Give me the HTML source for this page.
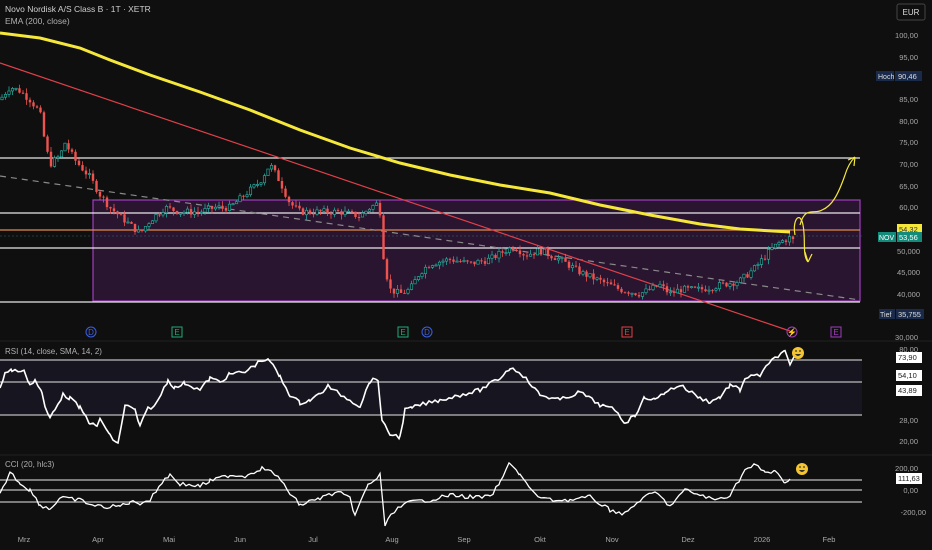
<!DOCTYPE html>
<html><head><meta charset="utf-8">
<style>
html,body{margin:0;padding:0;background:#0f0f0f;width:932px;height:550px;overflow:hidden;font-family:"Liberation Sans",sans-serif;}
svg{display:block}
text{font-family:"Liberation Sans",sans-serif;}
</style></head><body>
<svg id="s" width="932" height="550" viewBox="0 0 932 550" xmlns="http://www.w3.org/2000/svg">
<rect width="932" height="550" fill="#0f0f0f"/>
<!-- purple box -->
<rect x="93" y="200" width="767" height="101" fill="#2a1530" stroke="#a23ec0" stroke-width="1.2"/>
<!-- RSI band -->
<rect x="0" y="360" width="862" height="55" fill="#17151f"/>
<!-- pane separators -->
<line x1="0" y1="341" x2="932" y2="341" stroke="#222" />
<line x1="0" y1="455" x2="932" y2="455" stroke="#222" />
<!-- horizontal levels -->
<g stroke="#e8e8e8" stroke-width="1.3">
<line x1="0" y1="158" x2="860" y2="158"/>
<line x1="0" y1="213" x2="860" y2="213"/>
<line x1="0" y1="248" x2="860" y2="248"/>
<line x1="0" y1="302" x2="860" y2="302"/>
</g>
<line x1="0" y1="230" x2="860" y2="230" stroke="#e08a4a" stroke-width="1.3"/>
<line x1="0" y1="236" x2="862" y2="236" stroke="#2a6f6a" stroke-width="0.6" stroke-dasharray="2 2"/>
<!-- dashed trend -->
<line x1="0" y1="176" x2="860" y2="300" stroke="#8a8a8a" stroke-width="1.2" stroke-dasharray="6 5"/>
<!-- red trend -->
<line x1="0" y1="63" x2="790" y2="331" stroke="#e0404a" stroke-width="1.2"/>
<g id="candles"></g>
<!-- EMA -->
<polyline fill="none" stroke="#f5e83a" stroke-width="3" points="0,33 40,38 80,48 110,60 150,75 200,92 250,110 300,130 350,148 400,163 450,175 500,185 550,193 600,205 650,215 700,224 740,229 790,232"/>
<!-- hand-drawn arrows -->
<path d="M795,235 C792,220 800,210 803,225 C806,240 802,255 808,262 M808,262 L805,252 M808,262 L812,254" fill="none" stroke="#f5e83a" stroke-width="1.2"/>
<path d="M800,225 C805,205 815,215 822,210 C832,206 838,195 845,175 C848,165 852,160 855,157 M855,157 L848,160 M855,157 L854,166" fill="none" stroke="#f5e83a" stroke-width="1.2"/>
<!-- events -->
<g font-size="8" text-anchor="middle">
<circle cx="91" cy="332" r="5" fill="none" stroke="#3d5fe0"/><text x="91" y="335" fill="#3d5fe0">D</text>
<rect x="172" y="327" width="10" height="10" fill="none" stroke="#22aa77"/><text x="177" y="335" fill="#22aa77">E</text>
<rect x="398" y="327" width="10" height="10" fill="none" stroke="#22aa77"/><text x="403" y="335" fill="#22aa77">E</text>
<circle cx="427" cy="332" r="5" fill="none" stroke="#3d5fe0"/><text x="427" y="335" fill="#3d5fe0">D</text>
<rect x="622" y="327" width="10" height="10" fill="none" stroke="#e0404a"/><text x="627" y="335" fill="#e0404a">E</text>
<circle cx="792" cy="332" r="5" fill="none" stroke="#a23ec0"/><text x="792" y="335" fill="#a23ec0">⚡</text>
<rect x="831" y="327" width="10" height="10" fill="none" stroke="#a23ec0"/><text x="836" y="335" fill="#a23ec0">E</text>
</g>
<!-- RSI lines -->
<g stroke="#bdbdbd" stroke-width="1.2">
<line x1="0" y1="360" x2="862" y2="360"/><line x1="0" y1="382" x2="862" y2="382"/><line x1="0" y1="415" x2="862" y2="415"/>
<line x1="0" y1="480" x2="862" y2="480"/><line x1="0" y1="490" x2="862" y2="490"/><line x1="0" y1="502" x2="862" y2="502"/>
</g>
<polyline id="rsi" fill="none" stroke="#fff" stroke-width="1.6"/>
<polyline id="cci" fill="none" stroke="#fff" stroke-width="1.3"/>
<!-- emojis -->
<g><circle cx="798" cy="353" r="6" fill="#f5c531"/><circle cx="796" cy="351" r="0.9" fill="#333"/><circle cx="800" cy="351" r="0.9" fill="#333"/><path d="M795,354 Q798,358 801,354Z" fill="#333"/></g>
<g><circle cx="802" cy="469" r="6" fill="#f5c531"/><circle cx="800" cy="467" r="0.9" fill="#333"/><circle cx="804" cy="467" r="0.9" fill="#333"/><path d="M799,470 Q802,474 805,470Z" fill="#333"/></g>
<!-- titles -->
<text x="5" y="12" font-size="8.5" fill="#cfcfcf">Novo Nordisk A/S Class B · 1T · XETR</text>
<text x="5" y="24" font-size="8.5" fill="#b0b0b0">EMA (200, close)</text>
<text x="5" y="354" font-size="8" fill="#b0b0b0">RSI (14, close, SMA, 14, 2)</text>
<text x="5" y="467" font-size="8" fill="#b0b0b0">CCI (20, hlc3)</text>
<!-- price axis -->
<rect x="897" y="4" width="28" height="16" rx="2" fill="none" stroke="#444"/>
<text x="911" y="15" font-size="8" fill="#ddd" text-anchor="middle">EUR</text>
<g font-size="7.5" fill="#a8a8a8" text-anchor="end">
<text x="918" y="38">100,00</text><text x="918" y="60">95,00</text><text x="918" y="102">85,00</text><text x="918" y="124">80,00</text><text x="918" y="145">75,00</text><text x="918" y="167">70,00</text><text x="918" y="189">65,00</text><text x="918" y="210">60,00</text><text x="920" y="254">50,000</text><text x="920" y="275">45,000</text><text x="920" y="297">40,000</text><text x="918" y="340">30,000</text>
<text x="918" y="352">80,00</text><text x="918" y="423">28,00</text><text x="918" y="444">20,00</text>
<text x="918" y="471">200,00</text><text x="918" y="493">0,00</text><text x="926" y="515">-200,00</text>
</g>
<rect x="876" y="71" width="18" height="10" fill="#1a2a4a"/><text x="878" y="79" font-size="7" fill="#ddd">Hoch</text>
<rect x="895" y="71" width="27" height="10" fill="#1a2a4a"/><text x="898" y="79" font-size="7.5" fill="#ddd">90,46</text>
<rect x="897" y="224" width="25" height="10" fill="#f5e83a"/><text x="899" y="232" font-size="7.5" fill="#333">54,32</text>
<rect x="878" y="232" width="18" height="10" fill="#138a7a"/><text x="879" y="240" font-size="7" fill="#fff">NOV</text>
<rect x="897" y="232" width="25" height="10" fill="#138a7a"/><text x="899" y="240" font-size="7.5" fill="#fff">53,56</text>
<rect x="879" y="309" width="16" height="10" fill="#1a2a4a"/><text x="880" y="317" font-size="7" fill="#ddd">Tief</text>
<rect x="896" y="309" width="28" height="10" fill="#1a2a4a"/><text x="898" y="317" font-size="7.5" fill="#ddd">35,755</text>
<rect x="896" y="352" width="26" height="11" fill="#fff"/><text x="898" y="360" font-size="7.5" fill="#222">73,90</text>
<rect x="896" y="370" width="26" height="11" fill="#fff"/><text x="898" y="378" font-size="7.5" fill="#222">54,10</text>
<rect x="896" y="385" width="26" height="11" fill="#fff"/><text x="898" y="393" font-size="7.5" fill="#222">43,89</text>
<rect x="896" y="473" width="26" height="11" fill="#fff"/><text x="898" y="481" font-size="7.5" fill="#222">111,63</text>
<!-- time axis -->
<g font-size="7.5" fill="#a8a8a8" text-anchor="middle">
<text x="24" y="542">Mrz</text><text x="98" y="542">Apr</text><text x="169" y="542">Mai</text><text x="240" y="542">Jun</text><text x="313" y="542">Jul</text><text x="392" y="542">Aug</text><text x="464" y="542">Sep</text><text x="540" y="542">Okt</text><text x="612" y="542">Nov</text><text x="688" y="542">Dez</text><text x="762" y="542">2026</text><text x="829" y="542">Feb</text>
</g>
</svg>
<script>
(function(){
var NS="http://www.w3.org/2000/svg";
function P(p){return 35+(100-p)*4.314;}
var kp=[[0,85],[10,88],[20,87],[30,85],[40,82],[45,75],[50,70],[60,72],[65,75],[75,71],[90,67],[100,63],[110,60],[120,58],[130,56],[140,54],[150,57],[165,60],[180,59],[200,59],[215,60],[230,60],[245,63],[260,66],[270,70],[280,66],[290,61],[300,59],[320,59],[340,59],[360,58],[370,60],[378,61],[381,58],[384,47],[390,41],[400,40],[410,41],[420,45],[430,47],[450,48],[470,47],[490,48],[505,50],[515,51],[525,49],[540,50],[560,48],[580,45],[600,43],[620,41],[640,40],[660,42],[670,40],[680,41],[700,41],[720,42],[740,43],[755,46],[770,50],[780,52],[790,53],[795,52]];
function interp(x){for(var i=1;i<kp.length;i++){if(x<=kp[i][0]){var a=kp[i-1],b=kp[i];return a[1]+(b[1]-a[1])*(x-a[0])/(b[0]-a[0]);}}return kp[kp.length-1][1];}
var seed=7;function r(){seed=(seed*9301+49297)%233280;return seed/233280;}
var g=document.getElementById("candles");var prev=interp(0);
for(var x=2;x<=795;x+=3.5){var c=interp(x)+(r()-0.5)*1.6;var o=prev;prev=c;
var hi=Math.max(o,c)+r()*1.2,lo=Math.min(o,c)-r()*1.2;var up=c>=o;var col=up?"#26a69a":"#ef5350";
var l=document.createElementNS(NS,"line");l.setAttribute("x1",x);l.setAttribute("x2",x);l.setAttribute("y1",P(hi));l.setAttribute("y2",P(lo));l.setAttribute("stroke",col);l.setAttribute("stroke-width","0.8");g.appendChild(l);
var rc=document.createElementNS(NS,"rect");var y1=P(Math.max(o,c)),h=Math.max(1,P(Math.min(o,c))-y1);rc.setAttribute("x",x-1.2);rc.setAttribute("y",y1);rc.setAttribute("width",2.4);rc.setAttribute("height",h);
if(up){rc.setAttribute("fill","#0f0f0f");rc.setAttribute("stroke",col);rc.setAttribute("stroke-width","0.7");}else rc.setAttribute("fill",col);g.appendChild(rc);}
function jit(pts,amt){var out=[];for(var i=1;i<pts.length;i++){var a=pts[i-1],b=pts[i];for(var x=a[0];x<b[0];x+=3){var y=a[1]+(b[1]-a[1])*(x-a[0])/(b[0]-a[0])+(r()-0.5)*amt;out.push(x.toFixed(1)+","+y.toFixed(1));}}var L=pts[pts.length-1];out.push(L[0]+","+L[1]);return out.join(" ");}
var rsi=[[0,388],[5,373],[12,370],[25,372],[30,385],[35,380],[42,393],[45,408],[50,418],[55,408],[63,395],[70,398],[80,408],[90,423],[97,427],[100,418],[110,436],[118,444],[125,405],[135,410],[140,427],[148,408],[155,406],[168,380],[175,388],[185,383],[200,390],[210,378],[220,382],[230,374],[245,372],[255,365],[262,360],[270,361],[280,377],[290,395],[300,403],[310,400],[320,394],[328,386],[338,393],[350,400],[360,406],[370,381],[378,379],[382,422],[390,434],[400,437],[405,410],[412,408],[420,405],[440,400],[460,395],[480,390],[500,378],[510,368],[520,372],[540,395],[560,400],[580,392],[600,405],[615,410],[625,423],[635,415],[645,397],[655,400],[665,392],[680,385],[700,398],[710,402],[720,397],[730,385],[740,390],[745,378],[760,375],[775,357],[785,352],[790,366],[795,355]];
var cci=[[0,495],[10,472],[20,483],[30,490],[40,505],[50,509],[60,498],[80,500],[95,506],[110,507],[120,506],[130,502],[140,503],[150,500],[165,478],[170,475],[180,484],[200,486],[210,481],[230,475],[245,476],[262,468],[275,474],[290,493],[300,505],[320,498],[338,492],[350,499],[355,515],[368,485],[377,478],[380,475],[385,525],[395,510],[410,502],[430,500],[450,495],[470,497],[490,497],[500,483],[510,462],[520,475],[535,495],[550,500],[570,500],[590,497],[610,510],[625,514],[640,500],[655,492],[670,506],[685,490],[700,495],[715,500],[730,495],[745,470],[755,465],[765,472],[775,472],[785,482],[790,479]];
document.getElementById("rsi").setAttribute("points",jit(rsi,4));
document.getElementById("cci").setAttribute("points",jit(cci,4));
})();
</script>
</body></html>
